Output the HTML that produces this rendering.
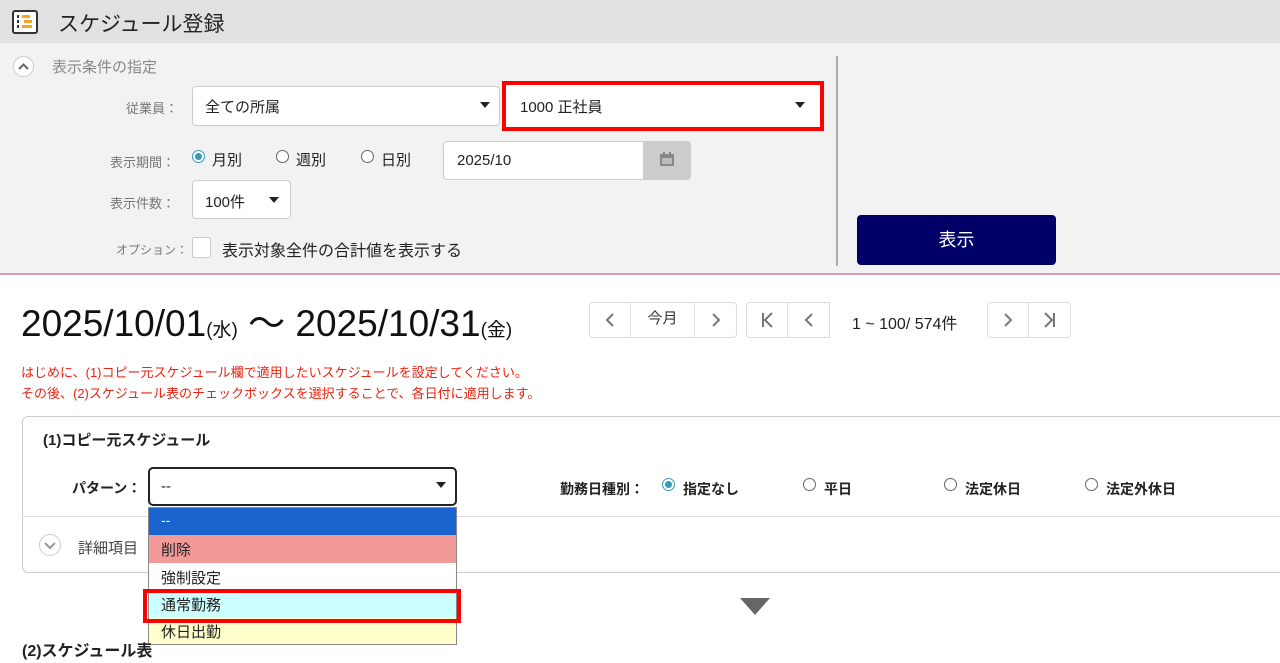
<!DOCTYPE html>
<html><head><meta charset="utf-8"><style>
*{box-sizing:border-box;margin:0;padding:0}
body{width:1280px;height:663px;overflow:hidden;background:#fff;font-family:"Liberation Sans","Noto Sans CJK JP",sans-serif;color:#222;position:relative}
.a{position:absolute}
.box{position:absolute;background:#fff;border:1px solid #ccc;border-radius:4px}
.tri{position:absolute;width:0;height:0;border-left:5px solid transparent;border-right:5px solid transparent;border-top:6px solid #222}
.lbl{position:absolute;font-size:13px;color:#777}
.rad{position:absolute;width:13px;height:13px;border:1px solid #666;border-radius:50%;background:#fff}
.rad.on{border:1px solid #3a9ab5;}
.rad.on:after{content:"";position:absolute;left:2px;top:2px;width:7px;height:7px;border-radius:50%;background:#3a9ab5}
.pb{position:absolute;height:36px;border:1px solid #ddd;background:#fff;color:#777;font-size:15px;text-align:center;line-height:32px}
.pb svg{position:absolute;left:50%;top:50%;margin-left:-8px;margin-top:-9px}
</style></head><body>
<div class="a" style="left:0;top:0;width:1280px;height:43px;background:#e1e1e1"></div>
<svg class="a" style="left:12px;top:10px" width="26" height="24" viewBox="0 0 26 24"><rect x="1" y="1" width="24" height="22" rx="2" fill="#fff" stroke="#333" stroke-width="2"/><rect x="10" y="5" width="8" height="3" fill="#f5a623"/><rect x="12" y="10" width="8" height="3" fill="#f5a623"/><rect x="10" y="15" width="10" height="3" fill="#f5a623"/><rect x="5" y="5" width="2" height="3" fill="#333"/><rect x="5" y="10" width="2" height="3" fill="#333"/><rect x="5" y="15" width="2" height="3" fill="#333"/></svg>
<div class="a" style="left:58px;top:8px;font-size:21px;color:#222">スケジュール登録</div>
<div class="a" style="left:0;top:43px;width:1280px;height:232px;background:#f2f2f2;border-bottom:2px solid #d79ab4"></div>
<div class="a" style="left:836px;top:56px;width:2px;height:210px;background:#aaa"></div>
<div class="a" style="left:13px;top:56px;width:21px;height:21px;border:1px solid #ccc;border-radius:50%;background:#fff"></div>
<svg class="a" style="left:13px;top:56px" width="21" height="21"><polyline points="6,13 10.5,8.5 15,13" fill="none" stroke="#666" stroke-width="2"/></svg>
<div class="a" style="left:52px;top:56px;font-size:15px;color:#888">表示条件の指定</div>
<div class="lbl" style="left:126px;top:98px">従業員：</div>
<div class="box" style="left:192px;top:86px;width:308px;height:40px"></div>
<div class="a" style="left:205px;top:96px;font-size:15px">全ての所属</div>
<div class="tri" style="left:480px;top:102px"></div>
<div class="a" style="left:502px;top:81px;width:322px;height:50px;border:4px solid #f00;background:#fff"></div>
<div class="a" style="left:520px;top:96px;font-size:15px">1000 正社員</div>
<div class="tri" style="left:795px;top:102px"></div>
<div class="lbl" style="left:110px;top:152px">表示期間：</div>
<div class="rad on" style="left:192px;top:150px"></div><div class="a" style="left:212px;top:149px;font-size:15px">月別</div>
<div class="rad" style="left:276px;top:150px"></div><div class="a" style="left:296px;top:149px;font-size:15px">週別</div>
<div class="rad" style="left:361px;top:150px"></div><div class="a" style="left:381px;top:149px;font-size:15px">日別</div>
<div class="box" style="left:443px;top:141px;width:248px;height:39px"></div>
<div class="a" style="left:643px;top:141px;width:48px;height:39px;background:#ccc;border-radius:0 4px 4px 0"></div>
<svg class="a" style="left:659px;top:151px" width="16" height="16" viewBox="0 0 16 16"><rect x="1" y="3" width="14" height="12" rx="1" fill="#888"/><rect x="4" y="1" width="2" height="4" fill="#888"/><rect x="10" y="1" width="2" height="4" fill="#888"/><rect x="3" y="7" width="10" height="6" fill="#bbb"/></svg>
<div class="a" style="left:457px;top:152px;font-size:15px">2025/10</div>
<div class="lbl" style="left:110px;top:193px">表示件数：</div>
<div class="box" style="left:192px;top:180px;width:99px;height:39px"></div>
<div class="a" style="left:205px;top:191px;font-size:15px">100件</div>
<div class="tri" style="left:269px;top:197px"></div>
<div class="lbl" style="left:116px;top:241px;font-size:12px">オプション：</div>
<div class="a" style="left:192px;top:237px;width:19px;height:21px;border:1px solid #ccc;background:#fff;border-radius:2px"></div>
<div class="a" style="left:222px;top:237px;font-size:16px">表示対象全件の合計値を表示する</div>
<div class="a" style="left:857px;top:215px;width:199px;height:50px;background:#000066;border-radius:4px;color:#fff;font-size:18px;text-align:center;line-height:50px">表示</div>

<div class="a" style="left:21px;top:293px;font-size:37px;color:#111;white-space:nowrap">2025/10/01<span style="font-size:19px">(水)</span> ～ 2025/10/31<span style="font-size:19px">(金)</span></div>
<div class="pb" style="left:589px;top:302px;width:42px;border-radius:4px 0 0 4px"><svg width="16" height="18"><polyline points="11,3 5,9 11,15" fill="none" stroke="#777" stroke-width="2"/></svg></div>
<div class="pb" style="left:630px;top:302px;width:65px;color:#333">今月</div>
<div class="pb" style="left:694px;top:302px;width:43px;border-radius:0 4px 4px 0"><svg width="16" height="18"><polyline points="5,3 11,9 5,15" fill="none" stroke="#777" stroke-width="2"/></svg></div>
<div class="pb" style="left:746px;top:302px;width:42px;border-radius:4px 0 0 4px"><svg width="16" height="18"><line x1="4" y1="2" x2="4" y2="16" stroke="#777" stroke-width="2"/><polyline points="13,2 6,9 13,16" fill="none" stroke="#777" stroke-width="2"/></svg></div>
<div class="pb" style="left:787px;top:302px;width:43px"><svg width="16" height="18"><polyline points="11,3 5,9 11,15" fill="none" stroke="#777" stroke-width="2"/></svg></div>
<div class="a" style="left:852px;top:310px;font-size:16px;color:#222">1 ~ 100/ 574件</div>
<div class="pb" style="left:987px;top:302px;width:42px;border-radius:4px 0 0 4px"><svg width="16" height="18"><polyline points="5,3 11,9 5,15" fill="none" stroke="#777" stroke-width="2"/></svg></div>
<div class="pb" style="left:1028px;top:302px;width:43px;border-radius:0 4px 4px 0"><svg width="16" height="18"><polyline points="3,2 10,9 3,16" fill="none" stroke="#777" stroke-width="2"/><line x1="12" y1="2" x2="12" y2="16" stroke="#777" stroke-width="2"/></svg></div>
<div class="a" style="left:21px;top:362px;font-size:13px;color:#e21;line-height:21px">はじめに、(1)コピー元スケジュール欄で適用したいスケジュールを設定してください。<br>その後、(2)スケジュール表のチェックボックスを選択することで、各日付に適用します。</div>

<div class="a" style="left:22px;top:416px;width:1270px;height:157px;border:1px solid #ccc;border-radius:6px"></div>
<div class="a" style="left:22px;top:516px;width:1258px;height:1px;background:#ddd"></div>
<div class="a" style="left:43px;top:429px;font-size:15px;font-weight:bold">(1)コピー元スケジュール</div>
<div class="a" style="left:72px;top:478px;font-size:14px;font-weight:bold">パターン：</div>
<div class="a" style="left:148px;top:467px;width:309px;height:39px;border:2px solid #222;border-radius:5px;background:#fff"></div>
<div class="a" style="left:161px;top:478px;font-size:15px">--</div>
<div class="tri" style="left:436px;top:482px"></div>
<div class="a" style="left:560px;top:479px;font-size:14px;font-weight:bold">勤務日種別：</div>
<div class="rad on" style="left:662px;top:478px"></div><div class="a" style="left:683px;top:479px;font-size:14px;font-weight:bold">指定なし</div>
<div class="rad" style="left:803px;top:478px"></div><div class="a" style="left:824px;top:479px;font-size:14px;font-weight:bold">平日</div>
<div class="rad" style="left:944px;top:478px"></div><div class="a" style="left:965px;top:479px;font-size:14px;font-weight:bold">法定休日</div>
<div class="rad" style="left:1085px;top:478px"></div><div class="a" style="left:1106px;top:479px;font-size:14px;font-weight:bold">法定外休日</div>
<div class="a" style="left:39px;top:534px;width:22px;height:22px;border:1px solid #ccc;border-radius:50%"></div>
<svg class="a" style="left:39px;top:534px" width="22" height="22"><polyline points="6,9 11,14 16,9" fill="none" stroke="#999" stroke-width="2"/></svg>
<div class="a" style="left:78px;top:537px;font-size:15px;color:#444">詳細項目</div>

<div class="a" style="left:148px;top:507px;width:309px;height:138px;border:1px solid #888;background:#fff"></div>
<div class="a" style="left:149px;top:508px;width:307px;height:27px;background:#1a64d0;color:#fff;font-size:14px;padding:4px 12px">--</div>
<div class="a" style="left:149px;top:535px;width:307px;height:28px;background:#f29a99;font-size:15px;padding:4px 12px">削除</div>
<div class="a" style="left:149px;top:563px;width:307px;height:28px;background:#fff;font-size:15px;padding:4px 12px">強制設定</div>
<div class="a" style="left:149px;top:591px;width:307px;height:27px;background:#ccffff;font-size:15px;padding:3px 12px">通常勤務</div>
<div class="a" style="left:149px;top:618px;width:307px;height:26px;background:#ffffcc;font-size:15px;padding:3px 12px">休日出勤</div>
<div class="a" style="left:143px;top:589px;width:318px;height:34px;border:4px solid #f00"></div>

<div class="a" style="left:740px;top:598px;width:0;height:0;border-left:15px solid transparent;border-right:15px solid transparent;border-top:17px solid #666"></div>
<div class="a" style="left:22px;top:637px;font-size:16px;font-weight:bold">(2)スケジュール表</div>
</body></html>
